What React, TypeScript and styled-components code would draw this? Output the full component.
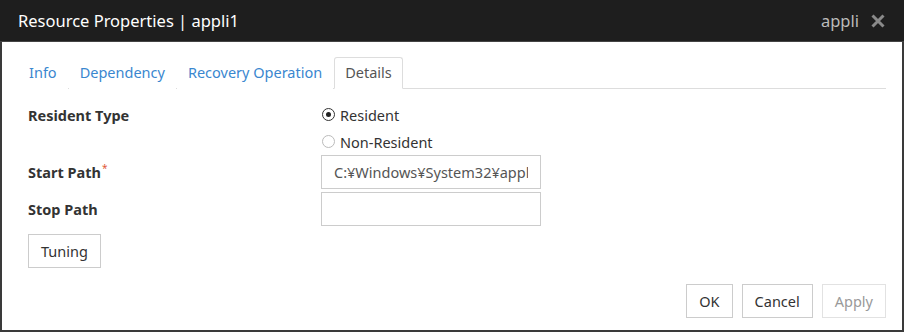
import React, { useState } from 'react'
import styled, { createGlobalStyle } from 'styled-components'

const GlobalStyle = createGlobalStyle`
  html, body {
    margin: 0;
    padding: 0;
    background: #fff;
  }
  body {
    font-family: "Noto Sans", "Liberation Sans", sans-serif;
    font-size: 14.5px;
    color: #333;
  }
`

const Dialog = styled.div`
  width: 904px;
  height: 332px;
  box-sizing: border-box;
  display: flex;
  flex-direction: column;
  border-left: 2px solid #3a3a3a;
  border-right: 2px solid #3a3a3a;
  border-bottom: 2px solid #3a3a3a;
  background: #fff;
`

const Header = styled.div`
  height: 41px;
  flex-shrink: 0;
  background: #1e1e1e;
  border-bottom: 1px solid #444;
  display: flex;
  align-items: center;
  padding: 0 19px 0 18px;
  margin: 0 -2px;
`

const Title = styled.div`
  color: #fff;
  font-size: 16.5px;
  flex-grow: 1;
`

const HostName = styled.span`
  color: #bbb;
  font-size: 16.5px;
  margin-right: 12px;
`

const CloseIcon = styled.svg`
  width: 14px;
  height: 14px;
  display: block;
`

const Body = styled.div`
  flex-grow: 1;
  display: flex;
  flex-direction: column;
  padding: 15px 16px 0 16px;
`

const TabBar = styled.div`
  display: flex;
  border-bottom: 1px solid #ddd;
  height: 31px;
`

const Tab = styled.div<{ $active?: boolean }>`
  padding: 0 10px 2px 10px;
  margin-right: 1px;
  margin-bottom: -1px;
  display: flex;
  align-items: center;
  color: ${p => (p.$active ? '#555' : '#3a87cf')};
  background: #fff;
  border: 1px solid ${p => (p.$active ? '#ddd' : 'transparent')};
  border-bottom-color: ${p => (p.$active ? '#fff' : 'transparent')};
  border-radius: 3px 3px 0 0;
  cursor: pointer;
`

const Form = styled.div`
  display: grid;
  grid-template-columns: 293px 220px;
  padding: 12px 0 0 10px;
  align-items: center;
`

const Label = styled.div<{ $field?: boolean }>`
  font-weight: bold;
  color: #333;
  padding-bottom: ${p => (p.$field ? '4px' : '0')};
`

const Required = styled.span`
  color: #e05a3a;
  font-size: 10px;
  font-weight: normal;
  position: relative;
  top: -6px;
  margin-left: 1px;
`

const RadioRow = styled.label`
  display: flex;
  align-items: center;
  height: 27px;
  color: #333;
`

const RadioDot = styled.span<{ $checked?: boolean }>`
  width: 11px;
  height: 11px;
  border-radius: 50%;
  border: 1px solid ${p => (p.$checked ? '#333' : '#bbb')};
  display: inline-flex;
  align-items: center;
  justify-content: center;
  margin: 0 5px 0 1px;
  &::after {
    content: '';
    width: 5px;
    height: 5px;
    border-radius: 50%;
    background: ${p => (p.$checked ? '#222' : 'transparent')};
  }
`

const TextInput = styled.input`
  width: 220px;
  height: 34px;
  box-sizing: border-box;
  border: 1px solid #ccc;
  padding: 0 12px;
  font-family: inherit;
  font-size: 14.5px;
  color: #555;
  margin-bottom: 3px;
  outline: none;
`

const Button = styled.button<{ $disabled?: boolean }>`
  height: 34px;
  box-sizing: border-box;
  padding: 0 12px;
  background: #fff;
  border: 1px solid ${p => (p.$disabled ? '#e2e2e2' : '#ccc')};
  color: ${p => (p.$disabled ? '#999' : '#333')};
  font-family: inherit;
  font-size: 14.5px;
  cursor: pointer;
`

const TuningRow = styled.div`
  padding: 5px 0 0 10px;
`

const Footer = styled.div`
  margin-top: auto;
  display: flex;
  justify-content: flex-end;
  gap: 9px;
  padding: 0 0 12px 0;
`

export default function App() {
  const [resident, setResident] = useState(true)
  const tabs = ['Info', 'Dependency', 'Recovery Operation', 'Details']
  return (
    <>
      <GlobalStyle />
      <Dialog>
        <Header>
          <Title>Resource Properties | appli1</Title>
          <HostName>appli</HostName>
          <CloseIcon viewBox="0 0 14 14">
            <path d="M1.5 1.5 L12.5 12.5 M12.5 1.5 L1.5 12.5" stroke="#8a8a8a" strokeWidth="3" />
          </CloseIcon>
        </Header>
        <Body>
          <TabBar>
            {tabs.map(t => (
              <Tab key={t} $active={t === 'Details'}>{t}</Tab>
            ))}
          </TabBar>
          <Form>
            <Label>Resident Type</Label>
            <RadioRow onClick={() => setResident(true)}>
              <RadioDot $checked={resident} />Resident
            </RadioRow>
            <div />
            <RadioRow onClick={() => setResident(false)}>
              <RadioDot $checked={!resident} />Non-Resident
            </RadioRow>
            <Label $field>Start Path<Required>*</Required></Label>
            <TextInput defaultValue="C:¥Windows¥System32¥appli.exe" />
            <Label $field>Stop Path</Label>
            <TextInput defaultValue="" />
          </Form>
          <TuningRow>
            <Button>Tuning</Button>
          </TuningRow>
          <Footer>
            <Button>OK</Button>
            <Button>Cancel</Button>
            <Button $disabled>Apply</Button>
          </Footer>
        </Body>
      </Dialog>
    </>
  )
}
